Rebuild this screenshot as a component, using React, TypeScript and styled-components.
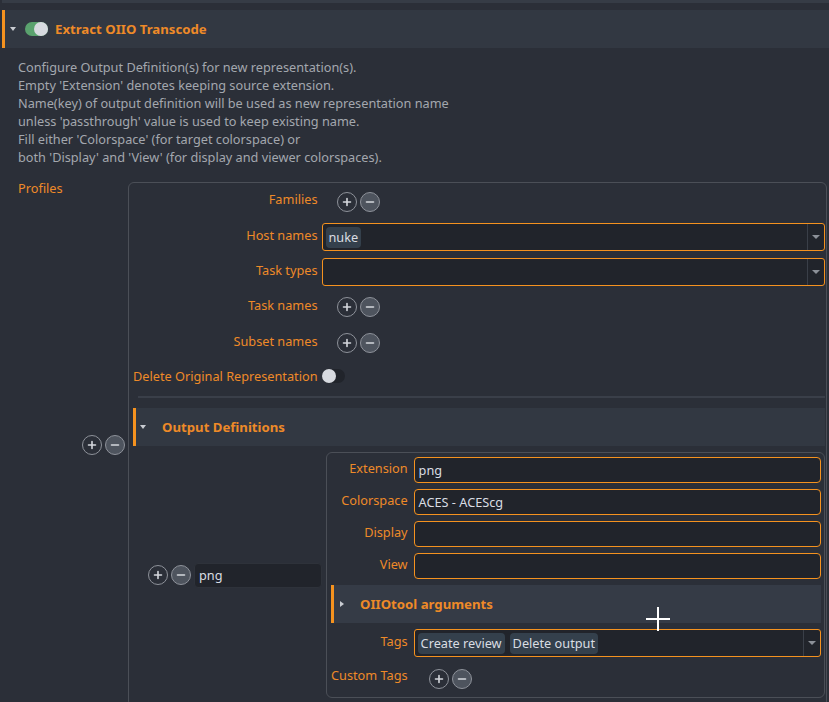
import React from 'react';
import styled, { createGlobalStyle } from 'styled-components';

const ORANGE_TEXT = '#ee8a28';
const ORANGE_LINE = '#f5921f';
const PAGE_BG = '#2b2f38';
const FIELD_BG = '#21242b';
const FRAME_LINE = '#4b4f57';

const Global = createGlobalStyle`
  html, body { margin: 0; padding: 0; background: ${PAGE_BG}; }
  body { font-family: "Noto Sans", "Open Sans", sans-serif; font-size: 12.72px; color: #d6d9de; overflow: hidden; }
  * { box-sizing: border-box; }
`;

const Page = styled.div`
  position: relative;
  width: 829px;
  height: 702px;
  overflow: hidden;
  background: ${PAGE_BG};
`;

const PrevTail = styled.div`
  height: 3px;
  margin-left: 2px;
  background: #363c46;
`;

const SectionHeader = styled.div<{ $nested?: boolean; $pad: number; $gapTop?: number; $h?: number }>`
  display: flex;
  align-items: center;
  height: ${p => p.$h ?? 38}px;
  margin-top: ${p => p.$gapTop ?? 0}px;
  padding-left: ${p => p.$pad}px;
  background: ${p => (p.$nested ? '#353b46' : '#323842')};
  border-left: 3px solid ${ORANGE_LINE};
`;

const MainHeader = styled(SectionHeader)`
  margin-left: 2px;
`;

const Caret = styled.span<{ $open: boolean }>`
  flex: none;
  width: 0;
  height: 0;
  ${p =>
    p.$open
      ? `border-left: 3px solid transparent; border-right: 3px solid transparent; border-top: 4px solid #c9ccd2;`
      : `border-top: 3.5px solid transparent; border-bottom: 3.5px solid transparent; border-left: 4px solid #c9ccd2;`}
`;

const Toggle = styled.span<{ $on: boolean; $ml?: number }>`
  position: relative;
  flex: none;
  display: inline-block;
  width: 23px;
  height: 14px;
  margin-left: ${p => p.$ml ?? 0}px;
  border-radius: 7px;
  background: ${p => (p.$on ? '#5aa26e' : FIELD_BG)};
  &::after {
    content: '';
    position: absolute;
    top: 0;
    ${p => (p.$on ? 'right: 0;' : 'left: 0;')}
    width: 14px;
    height: 14px;
    border-radius: 50%;
    background: #d7dae0;
  }
`;

const HeaderTitle = styled.span<{ $ml: number }>`
  margin-left: ${p => p.$ml}px;
  font-weight: 700;
  font-size: 13.2px;
  color: ${ORANGE_TEXT};
  white-space: nowrap;
`;

const Description = styled.div`
  margin-top: 10px;
  padding-left: 18px;
  line-height: 18px;
  color: #a3a7ae;
  white-space: nowrap;
`;

const ProfilesRow = styled.div`
  display: flex;
  align-items: flex-start;
  margin-top: 16px;
`;

const ProfilesLabel = styled.div`
  flex: none;
  width: 82px;
  padding-left: 18px;
  line-height: 13px;
  color: ${ORANGE_TEXT};
`;

const ItemRow = styled.div<{ $mr?: number }>`
  flex: 1;
  display: flex;
  align-items: center;
  gap: 3px;
  margin-right: ${p => p.$mr ?? 0}px;
`;

const BtnPair = styled.div<{ $pl?: number }>`
  display: flex;
  gap: 3px;
  padding-left: ${p => p.$pl ?? 0}px;
`;

const CircleBtn = styled.span<{ $filled?: boolean }>`
  flex: none;
  width: 20px;
  height: 20px;
  border-radius: 50%;
  border: 1px solid #8e929a;
  background: ${p => (p.$filled ? '#4e545e' : 'transparent')};
  display: inline-flex;
  align-items: center;
  justify-content: center;
`;

const Frame = styled.div<{ $pad: string }>`
  flex: 1;
  min-width: 0;
  border: 1px solid ${FRAME_LINE};
  border-radius: 6px;
  padding: ${p => p.$pad};
`;

const FormGrid = styled.div<{ $rowGap: number; $colGap: number }>`
  display: grid;
  grid-template-columns: auto 1fr;
  column-gap: ${p => p.$colGap}px;
  row-gap: ${p => p.$rowGap}px;
  align-items: start;
`;

const FieldLabel = styled.div<{ $pt?: number; $center?: boolean }>`
  text-align: right;
  color: ${ORANGE_TEXT};
  line-height: 18px;
  padding-top: ${p => p.$pt ?? 0}px;
  white-space: nowrap;
  align-self: ${p => (p.$center ? 'center' : 'start')};
`;

const FieldValue = styled.div<{ $h: number; $pl?: number }>`
  display: flex;
  align-items: center;
  height: ${p => p.$h}px;
  padding-left: ${p => p.$pl ?? 0}px;
  min-width: 0;
`;

const TextField = styled.div<{ $h: number }>`
  flex: 1;
  height: ${p => p.$h}px;
  display: flex;
  align-items: center;
  padding-left: 4px;
  border: 1px solid ${ORANGE_LINE};
  border-radius: 4px;
  background: ${FIELD_BG};
  color: #d9dde3;
  white-space: nowrap;
`;

const KeyField = styled.div`
  flex: none;
  width: 128px;
  height: 25px;
  margin-right: 1px;
  display: flex;
  align-items: center;
  padding-left: 4px;
  border: 1px solid #2e323a;
  border-radius: 4px;
  background: ${FIELD_BG};
  color: #d9dde3;
`;

const Combo = styled.div`
  flex: 1;
  height: 28px;
  display: flex;
  align-items: stretch;
  border: 1px solid ${ORANGE_LINE};
  border-radius: 3px;
  background: ${FIELD_BG};
`;

const ComboChips = styled.div`
  flex: 1;
  display: flex;
  align-items: center;
  gap: 5px;
  padding-left: 3px;
`;

const ComboArrow = styled.div`
  flex: none;
  width: 17px;
  border-left: 1px solid #3a3f48;
  display: flex;
  align-items: center;
  justify-content: center;
  &::before {
    content: '';
    width: 0;
    height: 0;
    border-left: 4px solid transparent;
    border-right: 4px solid transparent;
    border-top: 4px solid #8c9098;
  }
`;

const Chip = styled.span`
  height: 21px;
  line-height: 21px;
  padding: 0 3px;
  border-radius: 4px;
  background: #34404c;
  color: #d9dde2;
  white-space: nowrap;
`;

const Divider = styled.div`
  height: 2px;
  margin: 9px 0 0 5px;
  background: #3a3f49;
`;

const OutputBody = styled.div`
  display: flex;
  padding: 6px 0 0 15px;
`;

const WideCell = styled.div`
  grid-column: 1 / -1;
`;

const Cursor = styled.svg`
  position: absolute;
  left: 646px;
  top: 607px;
  pointer-events: none;
`;

const Plus = () => (
  <svg width="10" height="10" viewBox="0 0 10 10">
    <path d="M5 1.5v7M1.5 5h7" stroke="#d5d8dd" strokeWidth="1.6" strokeLinecap="round" />
  </svg>
);
const Minus = () => (
  <svg width="10" height="10" viewBox="0 0 10 10">
    <path d="M1.5 5h7" stroke="#d5d8dd" strokeWidth="1.6" strokeLinecap="round" />
  </svg>
);

const AddRemove: React.FC<{ pl?: number }> = ({ pl }) => (
  <BtnPair $pl={pl}>
    <CircleBtn>
      <Plus />
    </CircleBtn>
    <CircleBtn $filled>
      <Minus />
    </CircleBtn>
  </BtnPair>
);

const descLines = [
  'Configure Output Definition(s) for new representation(s).',
  "Empty 'Extension' denotes keeping source extension.",
  'Name(key) of output definition will be used as new representation name',
  "unless 'passthrough' value is used to keep existing name.",
  "Fill either 'Colorspace' (for target colorspace) or",
  "both 'Display' and 'View' (for display and viewer colorspaces).",
];

const textFields: { label: string; value: string }[] = [
  { label: 'Extension', value: 'png' },
  { label: 'Colorspace', value: 'ACES - ACEScg' },
  { label: 'Display', value: '' },
  { label: 'View', value: '' },
];

export default function App() {
  return (
    <Page>
      <Global />
      <PrevTail />
      <MainHeader $pad={5} $gapTop={7}>
        <Caret $open />
        <Toggle $on $ml={9} />
        <HeaderTitle $ml={7}>Extract OIIO Transcode</HeaderTitle>
      </MainHeader>
      <Description>
        {descLines.map(l => (
          <div key={l}>{l}</div>
        ))}
      </Description>
      <ProfilesRow>
        <ProfilesLabel>Profiles</ProfilesLabel>
        <ItemRow $mr={2}>
          <AddRemove />
          <Frame $pad="5px 1px 8px 4px">
            <FormGrid $rowGap={7} $colGap={4}>
              <FieldLabel $pt={2}>Families</FieldLabel>
              <FieldValue $h={28} $pl={15}>
                <AddRemove />
              </FieldValue>

              <FieldLabel $pt={3}>Host names</FieldLabel>
              <FieldValue $h={28}>
                <Combo>
                  <ComboChips>
                    <Chip>nuke</Chip>
                  </ComboChips>
                  <ComboArrow />
                </Combo>
              </FieldValue>

              <FieldLabel $pt={3}>Task types</FieldLabel>
              <FieldValue $h={28}>
                <Combo>
                  <ComboChips />
                  <ComboArrow />
                </Combo>
              </FieldValue>

              <FieldLabel $pt={3}>Task names</FieldLabel>
              <FieldValue $h={28} $pl={15}>
                <AddRemove />
              </FieldValue>

              <FieldLabel $pt={4}>Subset names</FieldLabel>
              <FieldValue $h={30} $pl={15}>
                <AddRemove />
              </FieldValue>

              <FieldLabel $center>Delete Original Representation</FieldLabel>
              <FieldValue $h={22}>
                <Toggle $on={false} />
              </FieldValue>
            </FormGrid>
            <Divider />
            <SectionHeader $pad={4} $gapTop={10}>
              <Caret $open />
              <HeaderTitle $ml={16}>Output Definitions</HeaderTitle>
            </SectionHeader>
            <OutputBody>
              <ItemRow>
                <AddRemove />
                <KeyField>png</KeyField>
                <Frame $pad="4px 3px 2px 4px">
                  <FormGrid $rowGap={6} $colGap={6}>
                    {textFields.map(f => (
                      <React.Fragment key={f.label}>
                        <FieldLabel $pt={2}>{f.label}</FieldLabel>
                        <FieldValue $h={26}>
                          <TextField $h={26}>{f.value}</TextField>
                        </FieldValue>
                      </React.Fragment>
                    ))}
                    <WideCell>
                      <SectionHeader $nested $pad={6} $h={38}>
                        <Caret $open={false} />
                        <HeaderTitle $ml={16}>OIIOtool arguments</HeaderTitle>
                      </SectionHeader>
                    </WideCell>
                    <FieldLabel $pt={3}>Tags</FieldLabel>
                    <FieldValue $h={28}>
                      <Combo>
                        <ComboChips>
                          <Chip>Create review</Chip>
                          <Chip>Delete output</Chip>
                        </ComboChips>
                        <ComboArrow />
                      </Combo>
                    </FieldValue>
                    <FieldLabel $pt={3}>Custom Tags</FieldLabel>
                    <FieldValue $h={32} $pl={15}>
                      <AddRemove />
                    </FieldValue>
                  </FormGrid>
                </Frame>
              </ItemRow>
            </OutputBody>
          </Frame>
        </ItemRow>
      </ProfilesRow>
      <Cursor width="25" height="25" viewBox="0 0 25 25">
        <path d="M12 0v24M0 12h24" stroke="#ffffff" strokeWidth="2" />
      </Cursor>
    </Page>
  );
}
